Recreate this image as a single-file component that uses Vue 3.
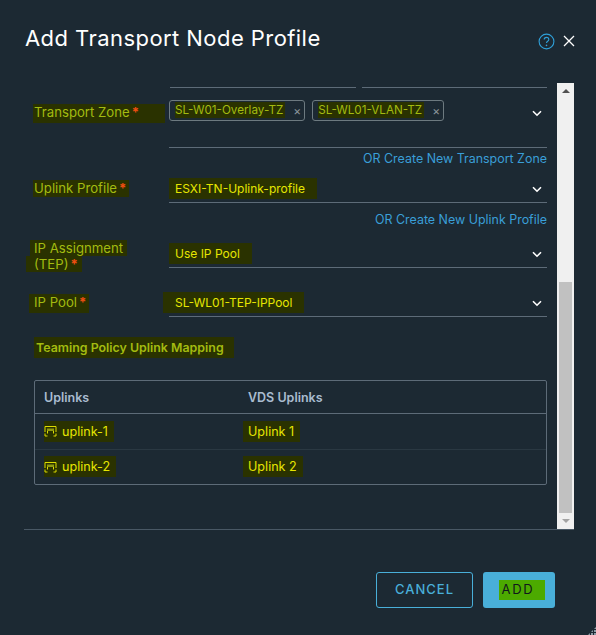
<script setup>
const rows = [{ a: 'uplink-1', b: 'Uplink 1' }, { a: 'uplink-2', b: 'Uplink 2' }]
</script>

<template>
  <div class="modal">
    <header class="head">
      <h1>Add Transport Node Profile</h1>
      <div class="head-icons">
        <svg class="help" width="17" height="17" viewBox="0 0 17 17">
          <circle cx="8.5" cy="8.5" r="7.4" fill="none" stroke="#2f9fd8" stroke-width="1.1" />
          <path d="M6.2 6.6c0-1.4 1-2.2 2.3-2.2s2.3.9 2.3 2c0 1.8-2.3 1.8-2.3 3.6" fill="none" stroke="#2f9fd8" stroke-width="1.1" />
          <circle cx="8.5" cy="12.4" r=".8" fill="#2f9fd8" />
        </svg>
        <svg class="close" width="12" height="12" viewBox="0 0 12 12">
          <path d="M1 1l10 10M11 1L1 11" stroke="#fff" stroke-width="1.3" fill="none" />
        </svg>
      </div>
    </header>

    <div class="body">
      <div class="content">
        <div class="stub"><i class="s1"></i><i class="s2"></i></div>

        <div class="row tz">
          <label class="lab tz-lab"><span class="hl dim tz-hl">Transport Zone<b>*</b></span></label>
          <div class="field tall">
            <span class="tag"><span class="hl dim tight">SL-W01-Overlay-TZ</span><em>×</em></span>
            <span class="tag"><span class="hl dim tight">SL-WL01-VLAN-TZ</span><em>×</em></span>
            <svg class="chev tz-chev" width="10" height="7" viewBox="0 0 10 7"><path d="M1 1.2l4 4 4-4" fill="none" stroke="#fff" stroke-width="1.6" /></svg>
          </div>
        </div>
        <a class="link l1">OR Create New Transport Zone</a>

        <div class="row r-up">
          <label class="lab"><span class="hl dim">Uplink Profile<b>*</b></span></label>
          <div class="field"><span class="hl val">ESXI-TN-Uplink-profile</span>
            <svg class="chev" width="10" height="7" viewBox="0 0 10 7"><path d="M1 1.2l4 4 4-4" fill="none" stroke="#fff" stroke-width="1.6" /></svg>
          </div>
        </div>
        <a class="link l2">OR Create New Uplink Profile</a>

        <div class="row r-ip">
          <label class="lab two">
            <span class="ln first">IP Assignment</span>
            <span class="ln second">(TEP)<b>*</b></span>
          </label>
          <div class="field"><span class="hl val">Use IP Pool</span>
            <svg class="chev" width="10" height="7" viewBox="0 0 10 7"><path d="M1 1.2l4 4 4-4" fill="none" stroke="#fff" stroke-width="1.6" /></svg>
          </div>
        </div>

        <div class="row r-pool">
          <label class="lab"><span class="hl dim pool-hl">IP Pool<b>*</b></span></label>
          <div class="field"><span class="hl val wide">SL-WL01-TEP-IPPool</span>
            <svg class="chev" width="10" height="7" viewBox="0 0 10 7"><path d="M1 1.2l4 4 4-4" fill="none" stroke="#fff" stroke-width="1.6" /></svg>
          </div>
        </div>

        <h2><span class="hl dim">Teaming Policy Uplink Mapping</span></h2>

        <div class="table">
          <div class="tr th">
            <div class="c1">Uplinks</div>
            <div class="c2">VDS Uplinks</div>
          </div>
          <div v-for="r in rows" :key="r.a" class="tr td">
            <div class="c1">
              <span class="hl cell icon-hl">
                <svg width="13" height="12" viewBox="0 0 13 12">
                  <path d="M1 7V1.500h11V7M1 8.500V11h2.500M12 8.500V11H9.500M3.500 6v2.500M9.500 6v2.500" fill="none" stroke="#dcdc00" stroke-width="1" />
                  <path d="M3 3.500h7V6H3z" fill="#8f9a10" />
                </svg>
                {{ r.a }}
              </span>
            </div>
            <div class="c2"><span class="hl cell shift">{{ r.b }}</span></div>
          </div>
        </div>
      </div>

      <div class="bar">
        <span class="arrow up"></span>
        <div class="track"><div class="thumb"></div></div>
        <span class="arrow down"></span>
      </div>
    </div>

    <footer class="foot">
      <button class="btn ghost">CANCEL</button>
      <button class="btn solid"><span>ADD</span></button>
    </footer>
    <div class="grip"></div>
  </div>
</template>

<style>
html, body { margin: 0; background: #1c2933; }
</style>

<style scoped>
.modal {
  position: relative;
  width: 596px;
  height: 635px;
  overflow: hidden;
  box-sizing: border-box;
  background: #1c2933;
  font-family: Inter, "Liberation Sans", sans-serif;
  font-size: 12px;
  color: #dcdc00;
}
.head {
  height: 83px;
  padding: 25px 21px 0 25px;
  box-sizing: border-box;
  display: flex;
  justify-content: space-between;
  align-items: flex-start;
}
h1 {
  margin: 0;
  font-size: 22px;
  line-height: 26px;
  font-weight: 400;
  letter-spacing: 0.44px;
  color: #fff;
}
.head-icons { display: flex; align-items: center; gap: 8px; padding-top: 8px; }
.close { position: relative; top: -1px; }
.body {
  margin-left: 24px;
  width: 550px;
  height: 447px;
  display: flex;
  border-bottom: 1px solid #495865;
  box-sizing: border-box;
}
.content { width: 533px; padding: 4px 10px 0; box-sizing: border-box; }
.stub { margin-left: 136px; display: flex; gap: 6px; }
.stub i { height: 1px; background: #5d6b78; display: block; }
.s1 { width: 186px; }
.s2 { width: 185px; }
.row { display: grid; grid-template-columns: 135px 378px; }
.r-up { margin-top: 1px; }
.r-ip { margin-top: 5px; }
.r-pool { margin-top: 14px; }
.lab { font-size: 13.2px; line-height: 16px; color: #a3bb10; align-self: end; padding-bottom: 7px; }
.tz-lab { align-self: start; padding-top: 16px; }
.two {
  padding-bottom: 0;
  margin-bottom: -4px;
  display: flex;
  flex-direction: column;
  align-items: flex-start;
}
.ln { display: block; height: 16px; line-height: 16px; background: #2a3200; }
.first { padding: 0 4px 0 4px; margin-left: -4px; }
.second { padding: 0 4px 0 8px; margin-left: -8px; }
.hl { background: #2a3200; }
.dim { color: #a3bb10; padding: 0 3px 1px 1px; margin-left: -1px; }
.tz-hl { padding-right: 26px; padding-bottom: 3px; }
.pool-hl { padding-left: 5px; margin-left: -5px; padding-bottom: 3px; }
.tight { padding: 1px 2px 1px 0; margin-left: 0; }
b { color: #f04e12; font-weight: 700; margin-left: 2px; }
.field {
  position: relative;
  display: flex;
  align-items: center;
  height: 35px;
  box-sizing: border-box;
  border-bottom: 1px solid #5d6b78;
  padding: 6px 0 0 6px;
}
.tall { height: 60px; align-items: flex-start; padding: 12px 0 0 0; gap: 7px; }
.tag {
  display: inline-flex;
  align-items: center;
  height: 21px;
  box-sizing: border-box;
  border: 1px solid #6d7a80;
  border-radius: 3px;
  padding: 0 3px 1px 5px;
  font-size: 11.7px;
  color: #a3bb10;
}
.tag em { font-style: normal; color: #8a949a; margin-left: 8px; font-size: 12px; }
.val { color: #e6e600; padding: 3px 12px 3px 6px; margin-left: -6px; }
.wide { padding-left: 12px; margin-left: -12px; }
.cell { color: #e6e600; padding: 3px 6px 3px 0; font-size: 12.6px; }
.shift { padding-left: 5px; margin-left: -5px; }
.chev { position: absolute; right: 5px; top: 18px; }
.tz-chev { top: 22px; }
.link {
  display: block;
  text-align: right;
  color: #3a9fd8;
  font-size: 12.45px;
  line-height: 16px;
  padding-top: 3px;
}
.l2 { padding-top: 9px; }
h2 {
  margin: 23px 0 24px -8px;
  padding-left: 10px;
  font-size: 12.4px;
  line-height: 16px;
  font-weight: 600;
  color: #a3bb10;
}
h2 .hl { padding: 3px 10px 3px 2px; margin-left: -2px; }
.table {
  width: 513px;
  box-sizing: border-box;
  border: 1px solid #5d6b78;
  border-radius: 2px;
}
.tr { display: grid; grid-template-columns: 204px 1fr; align-items: center; }
.th { height: 32px; border-bottom: 1px solid #5d6b78; color: #a9bcd0; font-weight: 600; font-size: 12.5px; box-sizing: content-box; }
.td { height: 35px; box-sizing: border-box; font-size: 13px; }
.td + .td { border-top: 1px solid #2a3842; }
.c1 { padding-left: 9px; }
.td .c1 { padding-bottom: 1px; }
.c2 { padding-left: 9px; }
.td .c2 { padding-bottom: 2px; }
.icon-hl { display: inline-flex; align-items: center; gap: 5px; }
.bar {
  width: 17px;
  background: #f0f0f0;
  display: flex;
  flex-direction: column;
  align-items: center;
}
.arrow { width: 0; height: 0; border-left: 4px solid transparent; border-right: 4px solid transparent; margin: 6px 0; }
.up { border-bottom: 4px solid #505050; }
.down { border-top: 4px solid #a3a3a3; }
.track { flex: 1; width: 100%; display: flex; flex-direction: column; justify-content: flex-end; }
.thumb { height: 231px; margin: 0 2px; background: #c1c1c1; }
.foot {
  display: flex;
  justify-content: flex-end;
  gap: 10px;
  padding: 42px 41px 0 0;
}
.btn {
  height: 36px;
  border-radius: 3px;
  font-family: inherit;
  font-size: 13px;
  letter-spacing: 1px;
  box-sizing: border-box;
  padding: 0 0 3px;
}
.ghost { width: 97px; background: transparent; border: 1px solid #49afd9; color: #49afd9; font-weight: 500; }
.solid { width: 72px; background: #49afd9; border: 0; color: #10181c; letter-spacing: 1.8px; padding-left: 6px; }
.solid span { background: #4caa00; padding: 1px 10px 3px 2px; }
.grip {
  position: absolute;
  right: 0;
  bottom: 0;
  width: 8px;
  height: 8px;
  background: radial-gradient(circle at 1px 1px, #8a98a3 1px, transparent 1px) 0 0 / 3px 3px;
  clip-path: polygon(100% 0, 100% 100%, 0 100%);
}
</style>
